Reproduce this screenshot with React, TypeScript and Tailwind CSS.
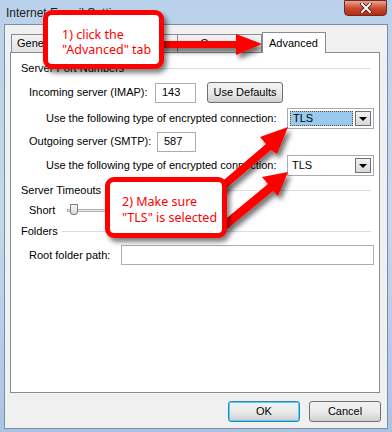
import React from 'react';

const uiFont = { fontFamily: '"Liberation Sans", Arial, sans-serif' };
const noteFont = { fontFamily: '"Noto Sans", "Segoe UI", sans-serif' };

function SectionHeader({ label }: { label: string }) {
  return (
    <div className="flex items-center gap-[4px] pl-[10px] pr-[8px] h-[16px]">
      <span className="whitespace-nowrap">{label}</span>
      <div className="flex-1 h-px bg-[#d5dfe5]" />
    </div>
  );
}

function TextBox({ value, className = '' }: { value?: string; className?: string }) {
  return (
    <div className={`h-[20px] bg-white border border-[#abadb3] px-[6px] flex items-center ${className}`}>
      {value}
    </div>
  );
}

function Select({ highlighted }: { highlighted?: boolean }) {
  return (
    <div className="w-[87px] h-[21px] bg-white border border-[#a5acb5] flex items-center p-[2px] gap-[2px]">
      <div
        className={`flex-1 h-full flex items-center px-[2px] ${
          highlighted ? 'bg-[#99c9ef] border border-dotted border-[#6b4c2a]' : ''
        }`}
      >
        TLS
      </div>
      <div className="w-[16px] h-full border border-[#707070] bg-gradient-to-b from-[#f2f2f2] to-[#d9d9d9] flex items-center justify-center">
        <div className="w-0 h-0 border-l-[4px] border-r-[4px] border-t-[4px] border-l-transparent border-r-transparent border-t-black" />
      </div>
    </div>
  );
}

function WinButton({ label, focused }: { label: string; focused?: boolean }) {
  return (
    <div
      className={`w-[72px] h-[21px] rounded-[3px] border flex items-center justify-center bg-gradient-to-b from-[#f2f2f2] via-[#ebebeb] to-[#cfcfcf] ${
        focused ? 'border-[#3c7fb1] shadow-[inset_0_0_0_1px_#48d5f5]' : 'border-[#707070]'
      }`}
    >
      {label}
    </div>
  );
}

const tabCls =
  'h-[18px] border border-b-0 border-[#898c95] bg-gradient-to-b from-[#f2f2f2] to-[#e3e3e3] flex items-center px-[5px] whitespace-nowrap overflow-hidden';

export default function App() {
  return (
    <div
      className="relative w-[392px] h-[432px] overflow-hidden bg-gradient-to-b from-[#b9d1ea] via-[#c4d8ee] to-[#a9c4e3] text-[11px] text-black whitespace-nowrap"
      style={uiFont}
    >
      {/* title bar */}
      <div className="h-[24px] relative">
        <div className="absolute left-[6px] top-[4px] text-[12px] text-[#1e1e1e]">Internet E-mail Settings</div>
        <div className="absolute right-[5px] top-0 w-[43px] h-[16px] rounded-b-[4px] border border-[#6e2a22] bg-gradient-to-b from-[#e8a493] via-[#cc4a31] to-[#b72a12] flex items-center justify-center">
          <svg width="12" height="10" viewBox="0 0 12 10">
            <path d="M2 1 L10 9 M10 1 L2 9" stroke="#3d1410" strokeWidth="3.4" strokeLinecap="square" />
            <path d="M2 1 L10 9 M10 1 L2 9" stroke="#ffffff" strokeWidth="2" strokeLinecap="square" />
          </svg>
        </div>
      </div>

      {/* client area */}
      <div className="absolute left-[4px] right-[4px] top-[24px] bottom-[3px] border border-[#7b8ea5] bg-[#f0f0f0] flex flex-col">
        {/* tabs */}
        <div className="h-[27px] flex items-end pl-[6px]">
          <div className={`${tabCls} w-[52px]`}>General</div>
          <div className={`${tabCls} w-[115px] border-l-0`}>Outgoing Server</div>
          <div className={`${tabCls} w-[84px] border-l-0 justify-end`}>Connection</div>
          <div className="h-[21px] w-[64px] px-[6px] border border-b-0 border-[#898c95] bg-white flex items-center -mb-px relative z-10">
            Advanced
          </div>
        </div>

        {/* tab panel */}
        <div className="ml-[5px] mr-[7px] h-[341px] bg-white border border-[#898c95] flex flex-col pt-[7px]">
          <SectionHeader label="Server Port Numbers" />
          <div className="flex items-center pl-[18px] mt-[6px] h-[21px]">
            <span className="w-[126px]">Incoming server (IMAP):</span>
            <TextBox value="143" className="w-[41px]" />
            <div className="ml-[11px] w-[76px] h-[21px] rounded-[3px] border border-[#707070] bg-gradient-to-b from-[#f2f2f2] via-[#ebebeb] to-[#cfcfcf] flex items-center justify-center">
              Use Defaults
            </div>
          </div>
          <div className="flex items-center pl-[35px] mt-[5px] h-[21px]">
            <span className="w-[241px]">Use the following type of encrypted connection:</span>
            <Select highlighted />
          </div>
          <div className="flex items-center pl-[18px] mt-[2px] h-[21px]">
            <span className="w-[128px]">Outgoing server (SMTP):</span>
            <TextBox value="587" className="w-[39px]" />
          </div>
          <div className="flex items-center pl-[35px] mt-[3px] h-[21px]">
            <span className="w-[241px]">Use the following type of encrypted connection:</span>
            <Select />
          </div>
          <div className="mt-[6px]">
            <SectionHeader label="Server Timeouts" />
          </div>
          <div className="flex items-center pl-[18px] mt-[2px] h-[20px]">
            <span className="w-[38px]">Short</span>
            <div className="relative w-[150px] h-[20px] flex items-center">
              <div className="w-full h-[3px] border border-[#b0b0b0] bg-[#e7eaea]" />
              <div className="absolute left-[3px] top-[4px] w-[8px] h-[11px] border border-[#7a7a7a] bg-gradient-to-b from-[#f7f7f7] to-[#d9d9d9] rounded-b-[3px]" />
            </div>
          </div>
          <div className="mt-[3px]">
            <SectionHeader label="Folders" />
          </div>
          <div className="flex items-center pl-[18px] mt-[6px] h-[20px]">
            <span className="w-[92px]">Root folder path:</span>
            <TextBox className="w-[253px]" />
          </div>
        </div>

        {/* buttons */}
        <div className="flex justify-end gap-[9px] pr-[6px] mt-[8px]">
          <WinButton label="OK" focused />
          <WinButton label="Cancel" />
        </div>
      </div>

      {/* annotation arrows */}
      <svg className="absolute inset-0 pointer-events-none" width="392" height="432" viewBox="0 0 392 432">
        <defs>
          <filter id="sh" x="-20%" y="-20%" width="140%" height="140%">
            <feDropShadow dx="3" dy="4" stdDeviation="2.5" floodColor="#000" floodOpacity="0.55" />
          </filter>
        </defs>
        <g filter="url(#sh)" fill="#ff0000">
          <polygon points="160,41 236,41 236,34 262,44 236,55 236,48 160,48" />
          <polygon points="218,185 266,144 260,137 288,127 277,154 271,150 223,191" />
          <polygon points="222,222 268,184 262,177 288,172 278,196 273,191 227,229" />
        </g>
      </svg>

      {/* callout 1 */}
      <div
        className="absolute left-[43px] top-[10px] w-[121px] h-[59px] rounded-[9px] border-[5px] border-[#ff0000] bg-white shadow-[3px_4px_5px_rgba(0,0,0,0.5)] pl-[14px] pt-[12px] text-[12.5px] leading-[15px] text-[#ff0000]"
        style={noteFont}
      >
        <div>1) click the</div>
        <div>"Advanced" tab</div>
      </div>

      {/* callout 2 */}
      <div
        className="absolute left-[105px] top-[177px] w-[122px] h-[61px] rounded-[9px] border-[5px] border-[#ff0000] bg-white shadow-[3px_4px_5px_rgba(0,0,0,0.5)] pl-[12px] pt-[12px] text-[12.5px] leading-[16px] text-[#ff0000]"
        style={noteFont}
      >
        <div>2) Make sure</div>
        <div>"TLS" is selected</div>
      </div>
    </div>
  );
}
